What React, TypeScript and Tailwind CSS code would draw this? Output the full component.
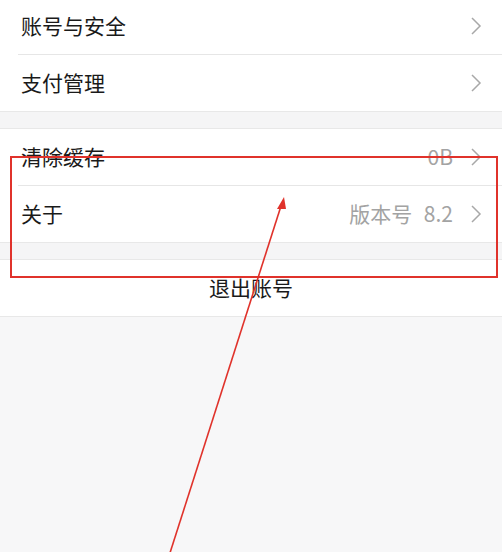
type Item = { label: string; value?: string };

const groups: Item[][] = [
  [{ label: '账号与安全' }, { label: '支付管理' }],
  [{ label: '清除缓存', value: '0B' }, { label: '关于', value: '版本号 8.2' }],
];

function Chevron() {
  return (
    <svg width="12" height="20" viewBox="0 0 12 20" className="shrink-0">
      <polyline points="2,2 10,10 2,18" fill="none" stroke="#a8a8a8" strokeWidth="1.5" />
    </svg>
  );
}

function Row({ item, divider }: { item: Item; divider: boolean }) {
  return (
    <div className="bg-white">
      <div className="flex h-[56px] items-center pl-[21px] pr-[20px]">
        <span className="flex-1 text-[21px] text-[#1a1a1a]">{item.label}</span>
        {item.value && (
          <span className="mr-[17px] text-[21px] text-[#a3a3a3] [word-spacing:7px]">{item.value}</span>
        )}
        <Chevron />
      </div>
      {divider && <div className="ml-[18px] h-px bg-[#e6e6e6]" />}
    </div>
  );
}

export default function App() {
  return (
    <main
      className="relative h-[552px] w-[502px] overflow-hidden bg-[#f7f7f8]"
      style={{ fontFamily: '"Noto Sans CJK SC", "Noto Sans", sans-serif' }}
    >
      <div className="-mt-[2px]">
        {groups.map((group, gi) => (
          <div key={gi}>
            <div className="border-b border-[#e8e8e8]">
              {group.map((item, i) => (
                <Row key={item.label} item={item} divider={i < group.length - 1} />
              ))}
            </div>
            <div className="h-[17px] border-b border-[#e8e8e8] bg-[#f5f5f6]" />
          </div>
        ))}
        <div className="flex h-[57px] items-center justify-center border-b border-[#e8e8e8] bg-white text-[21px] text-[#1a1a1a]">
          退出账号
        </div>
      </div>

      {/* annotation */}
      <div className="absolute left-[10px] top-[156px] h-[122px] w-[488px] border-2 border-[#e0322b]" />
      <svg className="absolute inset-0" width="502" height="552" viewBox="0 0 502 552">
        <line x1="169" y1="556" x2="281" y2="206" stroke="#e0322b" strokeWidth="1.6" />
        <polygon points="284,197 277,209 286,209" fill="#e0322b" />
      </svg>
    </main>
  );
}
